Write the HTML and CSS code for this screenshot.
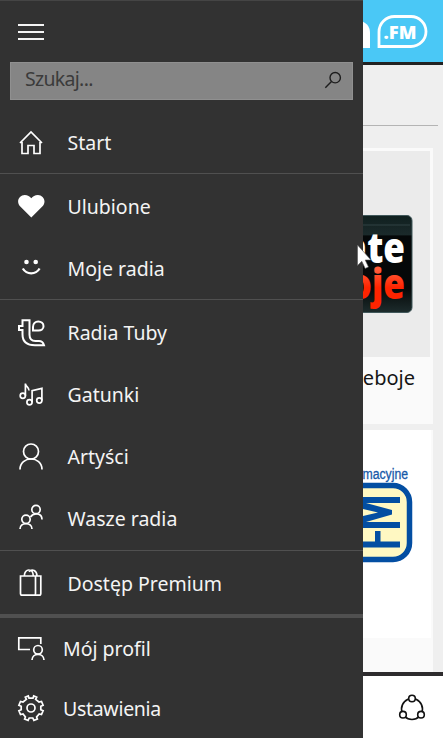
FILE: index.html
```html
<!DOCTYPE html>
<html lang="pl">
<head>
<meta charset="utf-8">
<title>Tuba.FM</title>
<link rel="stylesheet" href="styles.css">
</head>
<body>
<div class="screen">
  <main class="page">
    <header class="brand">
      <svg width="80" height="62" viewBox="363 0 80 62">
        <path d="M361 21c6 2 9 6 9 12v15h-9z" fill="#fff"/>
        <path d="M379 46.500V32a15.500 15.500 0 0 1 15.500-15.500h16.500a15 15 0 0 1 0 30z" fill="none" stroke="#fff" stroke-width="2.800"/>
        <text class="brand-fm" x="383.500" y="38.500" textLength="33" lengthAdjust="spacingAndGlyphs">.FM</text>
      </svg>
    </header>
    <div class="content">
      <div class="heading"></div>
      <article class="card">
        <svg class="cover cover-gray" width="67" height="206" viewBox="363 151 67 206">
          <defs>
            <linearGradient id="tile" x1="0" y1="0" x2="0" y2="1">
              <stop offset="0" stop-color="#10201f"/><stop offset=".2" stop-color="#1b2a2b"/><stop offset=".21" stop-color="#050809"/><stop offset=".75" stop-color="#050808"/><stop offset="1" stop-color="#1d2c2d"/>
            </linearGradient>
            <linearGradient id="red" x1="0" y1="0" x2="0" y2="1">
              <stop offset=".3" stop-color="#ff5a38"/><stop offset=".6" stop-color="#ff2400"/>
            </linearGradient>
          </defs>
          <rect x="330" y="215.500" width="82" height="97" rx="5" fill="url(#tile)" stroke="#41585b"/>
          <path d="M363 225h47" stroke="#314344"/>
          <text class="tile-text" x="334" y="262.500" textLength="71" lengthAdjust="spacingAndGlyphs" fill="#fff">late</text>
          <text class="tile-text" x="327" y="298.500" textLength="78" lengthAdjust="spacingAndGlyphs" fill="url(#red)">boje</text>
        </svg>
        <p class="caption">Przeboje</p>
      </article>
      <article class="card card-second">
        <svg class="cover cover-white" width="68" height="208" viewBox="363 430 68 208">
          <text class="info-text" x="338" y="479" textLength="70" lengthAdjust="spacingAndGlyphs">Informacyjne</text>
          <path d="M350 485.500h43a16.500 16.500 0 0 1 16.500 16.500v41a16.500 16.500 0 0 1-16.500 16.500h-43z" fill="#fff8c2" stroke="#034ea2" stroke-width="5.500"/>
          <path d="M350 497h50v6h-34l26 7v4.500l-26 7.500h34v6h-50v-9l28-6.500-28-6.500z" fill="#034ea2"/>
          <path d="M350 541.500h50v6h-50zM375 531h5.500v12h-5.500z" fill="#034ea2"/>
        </svg>
      </article>
    </div>
    <footer class="appbar">
      <svg width="30" height="30" viewBox="397 693 30 30" fill="none" stroke="#111" stroke-width="1.600">
        <circle cx="412" cy="709" r="10.500"/>
        <g fill="#fff"><circle cx="412" cy="698.500" r="3.300"/><circle cx="403" cy="714.700" r="3.300"/><circle cx="421" cy="714.700" r="3.300"/></g>
      </svg>
    </footer>
  </main>

  <nav class="drawer">
    <button class="menu-button" aria-label="Menu"><span></span><span></span><span></span></button>
    <div class="search">
      <span>Szukaj...</span>
      <svg width="18" height="18" viewBox="0 0 18 18" fill="none" stroke="#1d1d1d" stroke-width="1.400"><circle cx="11.200" cy="6.700" r="5.200"/><path d="M7.500 10.400 1.300 16.700"/></svg>
    </div>
    <ul class="group first">
      <li><svg class="icon" viewBox="0 0 30 30"><path d="m4 15 11-11 11 11M6 14v11.500h6v-8h6v8h6V14"/></svg><span>Start</span></li>
    </ul>
    <ul class="group">
      <li><svg class="icon" viewBox="0 0 30 30"><path class="solid" d="M15.300 25.500 3.800 14C-.2 9 3.500 3 8.700 3c3 0 5.100 1.300 6.600 3.300C16.800 4.300 18.900 3 21.900 3c5.200 0 8.900 6 4.900 11z"/></svg><span>Ulubione</span></li>
      <li><svg class="icon" viewBox="0 0 30 30"><circle class="solid" cx="10.500" cy="8" r="2.300"/><circle class="solid" cx="19.700" cy="8" r="2.300"/><path class="smile" d="M6.800 14.500c4 6.500 12.800 6.500 16.800 0"/></svg><span>Moje radia</span></li>
    </ul>
    <ul class="group stations">
      <li><svg class="icon tuba" viewBox="0 0 30 30"><path d="M6.500 2.300h7v14.500c0 4.200 2.300 6.200 6 6.200h3.500c2 0 4 .8 5 4.200H19c-8 0-12.500-4-12.500-11v-4.200H3V8h3.500zM17 12.500V9c0-3.500 2.300-5.500 5.300-5.500s5.200 2 5.200 4.700-2.300 4.300-5 4.300z"/></svg><span>Radia Tuby</span></li>
      <li><svg class="icon" viewBox="0 0 30 30"><circle cx="6.800" cy="15.800" r="2.600"/><path d="M9.400 15.800V3.500c.3 3.500 3.600 3.500 3.600 7"/><circle cx="13.500" cy="22.300" r="2.600"/><circle cx="23.300" cy="20.500" r="2.600"/><path d="M16.100 22.300V10.700l9.800-2.300v12.100"/></svg><span>Gatunki</span></li>
      <li><svg class="icon" viewBox="0 0 30 30"><circle cx="15" cy="9.500" r="7.500"/><path d="M4 27.500c0-14 22-14 22 0"/></svg><span>Artyści</span></li>
      <li><svg class="icon" viewBox="0 0 30 30"><circle cx="20" cy="5.500" r="4.200"/><circle cx="10" cy="15.300" r="4.200"/><path d="M4 25c0-7.300 12-7.300 12 0M14.500 13c3-5 11.500-4 11.500 2.500"/></svg><span>Wasze radia</span></li>
    </ul>
    <ul class="group premium">
      <li><svg class="icon" viewBox="0 0 30 30"><path d="M4.500 7h20.300v17.500c0 1-.6 1.700-1.700 1.700H6.200c-1 0-1.700-.7-1.700-1.700zM19.500 7v17.500c0 1-.6 1.700-1.500 1.700M8.300 7c0-8 9-8 9 0M13 2.700c3-3.500 8-1 8 4.300"/></svg><span>Dostęp Premium</span></li>
    </ul>
    <ul class="group account">
      <li><svg class="icon" viewBox="0 0 30 30"><path d="M14 15.500H2.800V3.800h22V10"/><circle cx="22" cy="15.800" r="4.300"/><path d="M16 26c0-7.500 12-7.500 12 0"/></svg><span>Mój profil</span></li>
      <li><svg class="icon" viewBox="0 0 30 30"><g transform="translate(0 -1)"><circle cx="15" cy="15" r="4"/><path d="M13 5.200 12.300 2.900 9.300 4.100 10.400 6.300 7 9 4.500 8.500 2.900 12.200 5.200 13.200v3.600l-2.300 1 1.600 3.700 2.500-.5L9.400 24l-.8 2.100 3.500 1.300L13.200 25h3.600l1.100 2.400 3.500-1.300-.8-2.100L23.200 21l2.300.5 1.600-3.700-2.300-1v-3.600l2.300-1L25.500 8.500 23 9l-3.400-2.700 1.100-2.200-3-1.200L17 5.200z"/></g></svg><span class="settings">Ustawienia</span></li>
    </ul>
  </nav>
  <svg class="cursor" width="18" height="28" viewBox="0 0 18 28"><path d="M1.500 1v20.500l4.300-4.200 3.400 7.200 3.300-1.600-3.300-6.900H15z" fill="#fff" stroke="#555" stroke-width=".6"/></svg>
</div>
</body>
</html>
```
FILE: styles.css
```css
* { box-sizing: border-box; }
body { margin: 0; font-family: "Noto Sans", "Open Sans", sans-serif; overflow: hidden; }
ul, p { margin: 0; padding: 0; list-style: none; }
svg { display: block; flex: none; }
.screen { position: relative; width: 443px; height: 738px; overflow: hidden; }

.page { display: flex; flex-direction: column; height: 738px; background: #efefef; }
.brand { display: flex; justify-content: flex-end; height: 65px; background: #4ac8f6; border-bottom: 3px solid #222; flex: none; }
.brand-fm { font: 800 18px "Open Sans", sans-serif; fill: #fff; }
.content { flex: 1; padding-right: 10px; overflow: hidden; }
.heading { height: 61px; margin-right: -5px; border-bottom: 1px solid #b4b4b4; }
.card { height: 276px; margin: 22px 0 6px; padding: 3px 3px 0 0; background: #fafafa; display: flex; flex-direction: column; align-items: flex-end; }
.card-second { margin: 0; padding: 0 2px 0 0; }
.cover-gray { background: #ebebeb; }
.cover-white { background: #fff; }
.tile-text { font: 800 42px "Open Sans", sans-serif; }
.info-text { font: 15.500px "Liberation Sans", sans-serif; fill: #1558a8; stroke: #1558a8; stroke-width: .3; }
.caption { font-size: 20px; line-height: 27px; padding: 7px 15px 0 0; color: #151515; }
.appbar { display: flex; justify-content: flex-end; height: 66px; padding: 17px 16px 0 0; border-top: 4px solid #2e2c2e; background: #fff; flex: none; }

.drawer { position: absolute; left: 0; top: 0; width: 363px; height: 738px; background: #323232; border-top: 1px solid #454545; color: #f4f4f4; font-size: 19.5px; }
.menu-button { display: flex; flex-direction: column; gap: 5px; width: 26px; margin: 23px 0 0 18px; padding: 0; border: 0; background: none; }
.menu-button span { height: 2px; background: #f4f4f4; }
.search { display: flex; justify-content: space-between; align-items: flex-start; height: 38px; margin: 22px 10px 12px; padding: 8px 10px 0 14px; border: 1px solid #909090; background: #858585; color: #3b3b3b; }
.search span { line-height: 16px; letter-spacing: -.7px; }
.group { border-top: 1px solid #505050; padding-top: 2px; }
.group.first { border: 0; padding: 0; }
.group li { display: flex; align-items: center; gap: 21.500px; height: 62px; padding-left: 16px; }
.group + .group { margin-bottom: -1px; }
.group.first li { height: 61px; }
.group.stations { padding-top: 2px; margin-bottom: 0; }
.group.premium { margin-bottom: -1px; }
.group.account { border-top: 4px solid #505050; padding-top: 1px; margin: 0; }
.account li { height: 60px; gap: 17px; }
.group span { line-height: 28px; }
.group .settings { letter-spacing: -.3px; }
.icon { width: 30px; height: 30px; fill: none; stroke: #fff; stroke-width: 1.700; }
.icon.tuba { stroke-width: 2; }
.icon .solid { fill: #fff; stroke: none; }
.icon .smile { stroke-width: 2.300; }
.cursor { position: absolute; left: 356px; top: 244px; }
```
